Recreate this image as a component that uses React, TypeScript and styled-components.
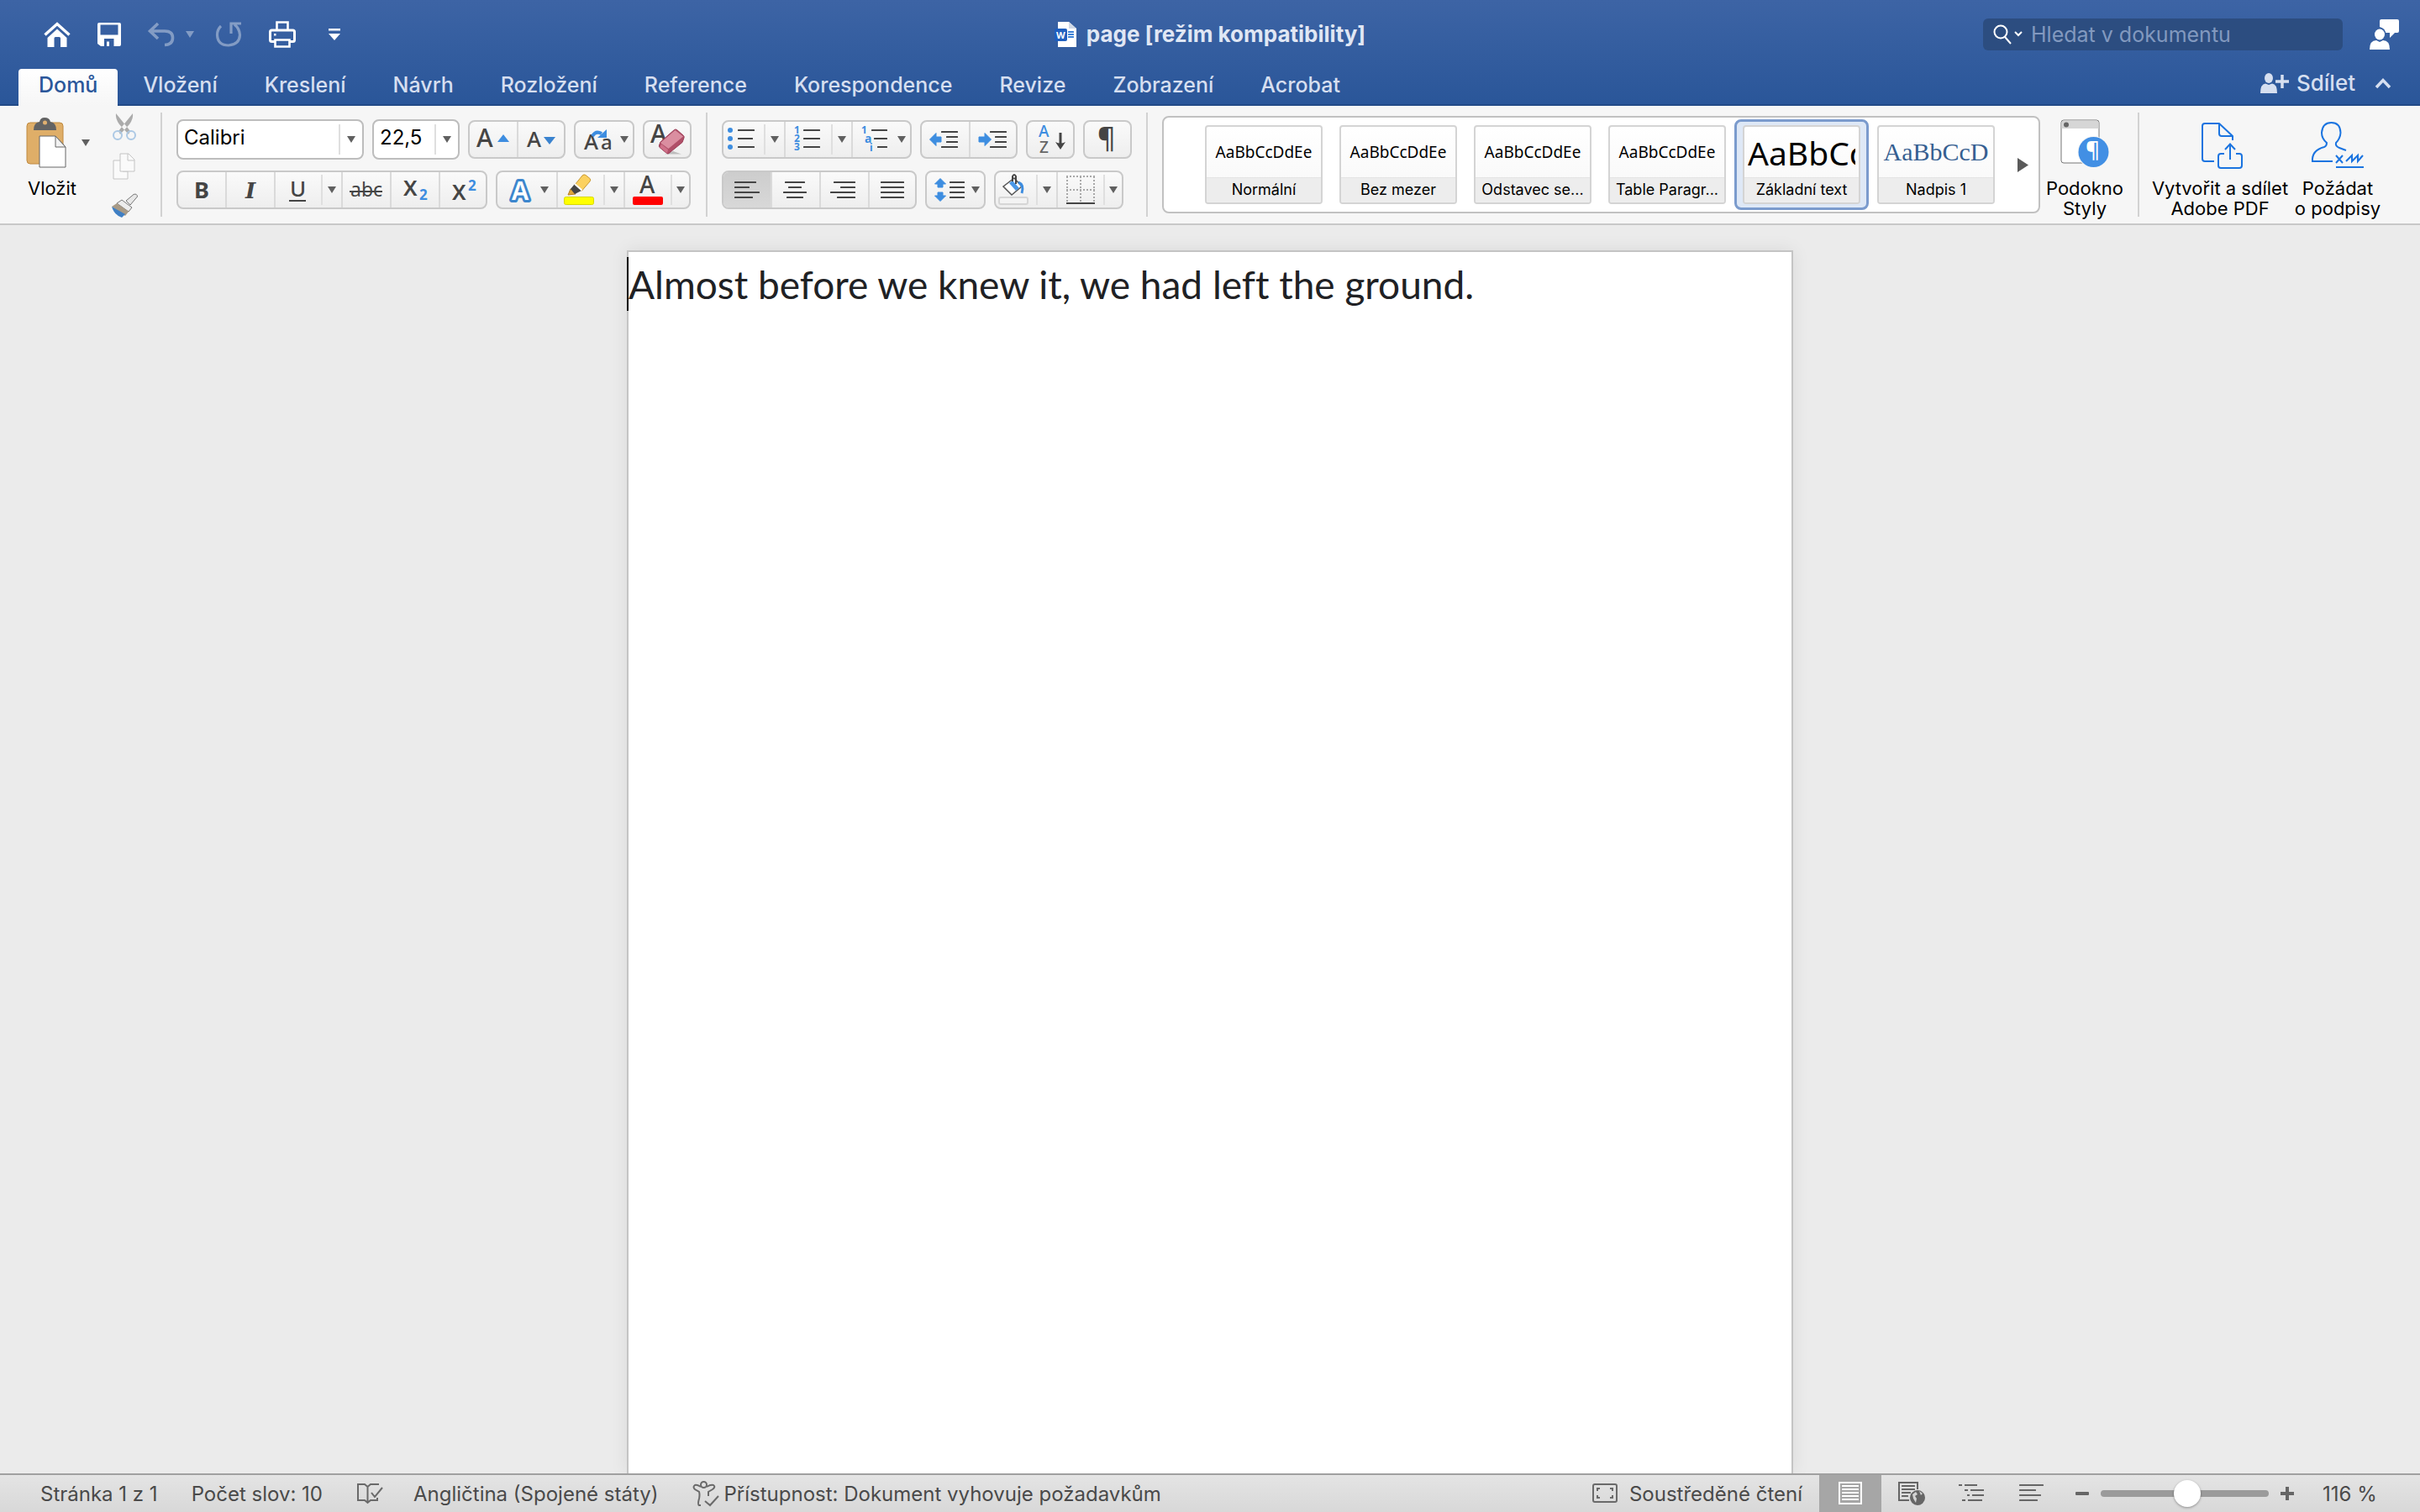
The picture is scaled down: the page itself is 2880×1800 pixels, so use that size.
import React from 'react';
import styled, { createGlobalStyle, css } from 'styled-components';

const GlobalStyle = createGlobalStyle`
  *, *::before, *::after { box-sizing: border-box; }
  html, body, #root { height: 100%; }
  body { margin: 0; background: #ebebeb; overflow: hidden; }
  button, input { font-family: inherit; font-size: inherit; color: inherit; margin: 0; }
  button { padding: 0; border: 0; background: none; display: inline-flex; align-items: center; justify-content: center; }
  svg { display: block; flex: none; overflow: visible; }
`;

const UI = `Inter, 'Liberation Sans', sans-serif`;
const HUMAN = `'Noto Sans', 'Open Sans', sans-serif`;

const Window = styled.div`
  display: flex;
  flex-direction: column;
  height: 100vh;
  font-family: ${UI};
  color: #000;
`;

/* ---------- Title bar ---------- */

const Header = styled.header`
  background: linear-gradient(#3d64a5, #2a5699);
  border-bottom: 2px solid #224a87;
  color: #d6dff0;
`;

const TitleRow = styled.div`
  display: grid;
  grid-template-columns: 1fr auto 1fr;
  align-items: center;
  height: 82px;
`;

const QuickBar = styled.nav`
  display: flex;
  align-items: center;
  padding-left: 48px;
  color: #fff;
`;

const QuickButton = styled.button<{ $w?: number; $gap?: number; $dim?: boolean }>`
  width: ${p => p.$w ?? 40}px;
  height: 40px;
  margin-right: ${p => p.$gap ?? 22}px;
  opacity: ${p => (p.$dim ? 0.38 : 1)};
`;

const Title = styled.h1`
  display: flex;
  align-items: center;
  gap: 12px;
  margin: 0;
  font-size: 26px;
  line-height: 32px;
  font-weight: 700;
  color: #e0e7f4;
`;

const HeaderRight = styled.div`
  display: flex;
  justify-content: flex-end;
  align-items: center;
  gap: 32px;
  padding-right: 25px;
`;

const SearchBox = styled.label`
  display: flex;
  align-items: center;
  gap: 10px;
  width: 428px;
  height: 38px;
  padding: 0 12px;
  border-radius: 6px;
  background: #2c4d80;
`;

const SearchInput = styled.input`
  flex: 1;
  min-width: 0;
  height: 36px;
  padding: 0;
  border: 0;
  outline: 0;
  background: transparent;
  font-size: 25px;
  color: #fff;
  &::placeholder { color: #8299bf; opacity: 1; }
`;

const TabRow = styled.div`
  display: flex;
  align-items: stretch;
  justify-content: space-between;
  height: 42px;
  padding: 0 33px 0 22px;
`;

const TabList = styled.div`
  display: flex;
`;

const Tab = styled.button<{ $active?: boolean }>`
  height: 44px;
  padding: 0 28px 6px;
  font-size: 25px;
  line-height: 36px;
  font-weight: 500;
  border-radius: 4px 4px 0 0;
  ${p => p.$active && css`
    padding: 0 24px 6px;
    margin-right: 2px;
    background: linear-gradient(#fff, #f6f6f6);
    color: #2b579a;
  `}
`;

const TabActions = styled.div`
  display: flex;
  align-items: center;
  gap: 22px;
  padding-bottom: 8px;
`;

const ShareButton = styled.button`
  gap: 8px;
  font-size: 26px;
  line-height: 32px;
  font-weight: 500;
`;

/* ---------- Ribbon ---------- */

const Ribbon = styled.section`
  display: flex;
  align-items: flex-start;
  height: 142px;
  padding: 0 49px 0 22px;
  background: #f6f6f6;
  border-bottom: 2px solid #c8c8c8;
`;

const Separator = styled.div`
  flex: none;
  width: 2px;
  height: 124px;
  margin: 8px 17px 0;
  background: #d2d2d2;
`;

const Clipboard = styled.div`
  display: flex;
  align-items: flex-start;
  width: 152px;
  flex: none;
`;

const PasteButton = styled.button`
  flex-direction: column;
  gap: 11px;
  width: 84px;
  padding: 14px 4px 0 0;
  font-size: 22px;
  line-height: 26px;
`;

const PasteIconRow = styled.span`
  display: flex;
  align-items: center;
  gap: 18px;
  margin-right: -13px;
`;

const ClipTools = styled.div`
  display: flex;
  flex-direction: column;
  align-items: center;
  gap: 12px;
  padding: 7px 0 0 24px;
`;

const ClipButton = styled.button`
  width: 36px;
  height: 35px;
`;

const ToolRows = styled.div`
  display: flex;
  flex-direction: column;
  flex: none;
  padding-top: 16px;
  gap: 12px;
`;

const ToolRow = styled.div`
  display: flex;
  align-items: center;
  height: 48px;
  gap: 10px;
`;

const Group = styled.div`
  display: flex;
  height: 46px;
  border: 2px solid #c9c9c9;
  border-radius: 8px;
  background: linear-gradient(#fafafa, #eeeeee);
`;

const Tool = styled.button<{ $w: number; $on?: boolean }>`
  flex: none;
  width: ${p => p.$w}px;
  height: 42px;
  justify-content: flex-start;
  border-left: 2px solid #dadada;
  &:first-child { border-left: 0; border-radius: 6px 0 0 6px; }
  ${p => p.$on && css`background: linear-gradient(#cdcdcd, #d8d8d8);`}
`;

const CaretTool = styled.button<{ $w?: number }>`
  flex: none;
  width: ${p => p.$w ?? 24}px;
  height: 36px;
  align-self: center;
  border-left: 2px solid #dfdfdf;
`;

const Combo = styled.div<{ $w: number }>`
  display: flex;
  align-items: center;
  width: ${p => p.$w}px;
  height: 48px;
  border: 2px solid #bdbdbd;
  border-radius: 8px;
  background: #fff;
`;

const ComboInput = styled.input`
  flex: 1;
  min-width: 0;
  height: 40px;
  padding: 0 0 5px 7px;
  border: 0;
  outline: 0;
  background: transparent;
  font-size: 24px;
`;

const Gallery = styled.div`
  display: flex;
  justify-content: flex-end;
  align-items: center;
  flex: 1;
  min-width: 0;
  height: 116px;
  margin-top: 12px;
  overflow: hidden;
  border: 2px solid #c1c1c1;
  border-radius: 8px;
  background: #fff;
`;

const StyleSlot = styled.button<{ $on?: boolean }>`
  flex: none;
  width: 160px;
  height: 108px;
  border: 3px solid ${p => (p.$on ? '#7b9bcd' : 'transparent')};
  border-radius: 8px;
  background: ${p => (p.$on ? '#dee8f6' : 'transparent')};
`;

const StyleCard = styled.span`
  display: flex;
  flex-direction: column;
  width: 140px;
  height: 94px;
  overflow: hidden;
  border: 2px solid #d4d4d4;
  border-radius: 4px;
  background: linear-gradient(#fff, #f7f7f7);
`;

const Sample = styled.span<{ $size: number; $serif?: boolean }>`
  display: flex;
  align-items: center;
  justify-content: ${p => (p.$size > 36 ? 'flex-start' : 'center')};
  height: 60px;
  margin: 0 4px;
  overflow: hidden;
  white-space: nowrap;
  font-size: ${p => p.$size}px;
  font-family: ${p => (p.$serif ? `'Liberation Serif', serif` : HUMAN)};
  color: ${p => (p.$serif ? '#365f91' : '#000')};
`;

const StyleName = styled.span`
  height: 30px;
  line-height: 28px;
  font-size: 18px;
  text-align: center;
  white-space: nowrap;
  background: #ededed;
  border-top: 1px solid #e4e4e4;
`;

const GalleryNext = styled.button`
  flex: none;
  width: 42px;
  height: 100px;
  padding-left: 4px;
`;

const BigButton = styled.button<{ $w: number }>`
  flex: none;
  flex-direction: column;
  width: ${p => p.$w}px;
  padding-top: 15px;
  gap: 9px;
  font-size: 22px;
  line-height: 24px;
  text-align: center;
  white-space: pre;
`;

const PaneSlot = styled.div`
  flex: none;
  margin: 0 1px 0 8px;
`;

const SendSlot = styled.div`
  display: flex;
  flex: none;
  gap: 12px;
`;

/* ---------- Document ---------- */

const Canvas = styled.main`
  flex: 1;
  min-height: 0;
  display: flex;
  justify-content: center;
  padding-top: 30px;
  overflow: hidden;
  background: #ebebeb;
`;

const Page = styled.article`
  width: 1388px;
  max-width: 100%;
  border: 2px solid #c4c4c4;
  border-width: 2px 2px 0;
  background: #fff;
  box-shadow: 0 0 20px rgba(0, 0, 0, 0.08);
`;

const Line = styled.p`
  position: relative;
  margin: 6px 0 0;
  font-family: Lato, Calibri, sans-serif;
  font-size: 46px;
  line-height: 66px;
  font-variant-ligatures: none;
  color: #202124;
  white-space: nowrap;
`;

const TextCursor = styled.span`
  position: absolute;
  left: -2px;
  top: 0;
  width: 2px;
  height: 64px;
  background: #000;
`;

/* ---------- Status bar ---------- */

const StatusBar = styled.footer`
  display: flex;
  align-items: stretch;
  height: 46px;
  padding: 0 50px 0 48px;
  border-top: 2px solid #a0a0a0;
  background: linear-gradient(#e4e4e4, #d8d8d8);
  font-size: 24px;
  color: #4a4a4a;
`;

const StatusItem = styled.button<{ $gap?: number }>`
  margin-right: ${p => p.$gap ?? 40}px;
  gap: 6px;
  white-space: nowrap;
`;

const FocusItem = styled(StatusItem)`
  gap: 14px;
`;

const StatusSpacer = styled.div`
  flex: 1;
`;

const ViewButton = styled.button<{ $on?: boolean }>`
  width: ${p => (p.$on ? 74 : 71)}px;
  background: ${p => (p.$on ? '#a6a6a6' : 'transparent')};
`;

const ZoomControl = styled.div`
  display: flex;
  align-items: center;
  gap: 14px;
  margin-left: 18px;
`;

const ZoomSlider = styled.input`
  appearance: none;
  width: 200px;
  height: 32px;
  background: transparent;
  &::-webkit-slider-runnable-track {
    height: 8px;
    border-radius: 4px;
    background: #9b9b9b;
  }
  &::-webkit-slider-thumb {
    appearance: none;
    width: 32px;
    height: 32px;
    margin-top: -12px;
    border-radius: 50%;
    background: #fff;
    box-shadow: 0 1px 3px rgba(0, 0, 0, 0.35);
  }
`;

const ZoomValue = styled.output`
  width: 66px;
  margin-left: 20px;
  white-space: nowrap;
`;

/* ---------- Icon helpers ---------- */

const INK = '#454545';
const BLUE = '#3d8de0';

type IconProps = { w: number; h?: number; children: React.ReactNode };
const Icon = ({ w, h = 42, children }: IconProps) => (
  <svg width={w} height={h} viewBox={`0 0 ${w} ${h}`} fill="none" aria-hidden="true">{children}</svg>
);

const Caret = ({ color = '#606060' }: { color?: string }) => (
  <Icon w={10} h={8}><path d="M0 0H10L5 8Z" fill={color} /></Icon>
);

type GlyphProps = { x: number; y: number; s: number; c?: string; b?: number; f?: string; i?: boolean; children: string };
const Glyph = ({ x, y, s, c = INK, b = 400, f = HUMAN, i, children }: GlyphProps) => (
  <text x={x} y={y} fontSize={s} fill={c} fontWeight={b} fontFamily={f} fontStyle={i ? 'italic' : 'normal'}>{children}</text>
);

const Lines = ({ rows, color = INK }: { rows: number[][]; color?: string }) => (
  <>{rows.map(([x1, x2, y]) => <rect key={y} x={x1} y={y - 1} width={x2 - x1} height={2} rx={0.5} fill={color} />)}</>
);

const InnerCaret = () => <path d="M53 17H63L58 25Z" fill="#606060" />;

const More = ({ label, w }: { label: string; w?: number }) => (
  <CaretTool aria-label={label} $w={w}><Caret /></CaretTool>
);

/* ---------- Data ---------- */

const tabs = ['Domů', 'Vložení', 'Kreslení', 'Návrh', 'Rozložení', 'Reference', 'Korespondence', 'Revize', 'Zobrazení', 'Acrobat'];

const styleCards = [
  { name: 'Normální', sample: 'AaBbCcDdEe', size: 19 },
  { name: 'Bez mezer', sample: 'AaBbCcDdEe', size: 19 },
  { name: 'Odstavec se...', sample: 'AaBbCcDdEe', size: 19 },
  { name: 'Table Paragr...', sample: 'AaBbCcDdEe', size: 19 },
  { name: 'Základní text', sample: 'AaBbCc', size: 39, on: true },
  { name: 'Nadpis 1', sample: 'AaBbCcD', size: 30, serif: true },
];

/* ---------- Parts ---------- */

const QuickAccess = () => (
  <QuickBar aria-label="Rychlý přístup">
    <QuickButton aria-label="Domů" $gap={22}>
      <Icon w={32} h={30}>
        <path d="M1.5 15.5L16 2.5L30.5 15.5" stroke="#fff" strokeWidth="3.4" />
        <path d="M4.5 19L16 8.5L27.5 19V30H20V19.5Q20 18 18.500 18H14Q12.500 18 12.500 19.500V30H4.500Z" fill="#fff" />
      </Icon>
    </QuickButton>
    <QuickButton aria-label="Uložit" $gap={22}>
      <Icon w={28} h={28}>
        <path fillRule="evenodd" d="M2 0H26Q28 0 28 2V26Q28 28 26 28H4L0 25V2Q0 0 2 0ZM3.500 2.500V14.500H24.500V2.500ZM8 19V28H11V22.500H14V28H19.500V19Z" fill="#fff" />
      </Icon>
    </QuickButton>
    <QuickButton aria-label="Zpět" $gap={4} $dim>
      <Icon w={32} h={28}>
        <path d="M12 1L2.500 10L12 19M3 10H20Q29.500 10 29.500 18Q29.500 26 20 26.500" stroke="#fff" strokeWidth="3.600" />
      </Icon>
    </QuickButton>
    <QuickButton aria-label="Možnosti zpět" $w={20} $gap={16} $dim><Caret color="#fff" /></QuickButton>
    <QuickButton aria-label="Opakovat" $gap={24} $dim>
      <Icon w={30} h={30}>
        <path d="M6 5Q1.500 9 1.500 15.500Q2 28 15 28Q28 27 28.500 15.500Q28 8 22 3M30 2H18V14" stroke="#fff" strokeWidth="3.200" />
      </Icon>
    </QuickButton>
    <QuickButton aria-label="Tisk" $gap={22}>
      <Icon w={32} h={32}>
        <path d="M9.500 11V1.500H22.500V11" stroke="#fff" strokeWidth="2.600" />
        <path d="M7 24.500H3.500Q1.500 24.500 1.500 22.500V13Q1.500 11 3.500 11H28.500Q30.500 11 30.500 13V22.500Q30.500 24.500 28.500 24.500H25" stroke="#fff" strokeWidth="3" />
        <path d="M7.500 22.500H24.500V30.500H7.500Z" stroke="#fff" strokeWidth="2.600" />
        <rect x="6" y="15" width="2.500" height="2.500" fill="#fff" />
      </Icon>
    </QuickButton>
    <QuickButton aria-label="Přizpůsobit panel" $gap={0}>
      <Icon w={14} h={14}><path d="M0 0H14V2.500H0ZM0 6H14L7 14Z" fill="#fff" /></Icon>
    </QuickButton>
  </QuickBar>
);

const FontTools = () => (
  <ToolRows>
    <ToolRow>
      <Combo $w={223}>
        <ComboInput aria-label="Písmo" defaultValue="Calibri" />
        <More label="Seznam písem" w={28} />
      </Combo>
      <Combo $w={104}>
        <ComboInput aria-label="Velikost písma" defaultValue="22,5" />
        <More label="Seznam velikostí" w={28} />
      </Combo>
      <Group>
        <Tool $w={56} aria-label="Zvětšit písmo">
          <Icon w={56}><Glyph x={8} y={30} s={30} b={500}>A</Glyph><path d="M33 24H47L40 15Z" fill={BLUE} /></Icon>
        </Tool>
        <Tool $w={56} aria-label="Zmenšit písmo">
          <Icon w={54}><Glyph x={10} y={30} s={26} b={500}>A</Glyph><path d="M30 18H44L37 27Z" fill="#3a83cf" /></Icon>
        </Tool>
      </Group>
      <Group>
        <Tool $w={68} aria-label="Změnit velikost písmen">
          <Icon w={68}>
            <Glyph x={10} y={33} s={26} b={500}>A</Glyph>
            <Glyph x={30} y={33} s={24} b={500}>a</Glyph>
            <path d="M20 17Q24 10 31 14" stroke={BLUE} strokeWidth="4" />
            <path d="M37 9V19H26Z" fill={BLUE} />
            <InnerCaret />
          </Icon>
        </Tool>
      </Group>
      <Group>
        <Tool $w={54} aria-label="Vymazat formátování">
          <Icon w={54}>
            <Glyph x={7} y={25} s={30} b={500}>A</Glyph>
            <path d="M24 38.500H44L34 35Z" fill="#bdbdbd" />
            <path d="M35.500 9.500Q37 8.500 38.500 9.500L46.500 16.500Q47.500 17.500 47 19L45 24.500L29 37.500Q28 38.500 26.500 37.500L18 30.500Q17 29.500 17.500 28L19 24Z" fill="#b04f68" stroke="#9c3f58" />
            <path d="M36.500 10L46 17.500L28.500 32L19 25Z" fill="#da8ea0" />
            <path d="M28 33L27 37.500L18.500 30.500L20 26.500Z" fill="#cf7189" />
          </Icon>
        </Tool>
      </Group>
    </ToolRow>
    <ToolRow>
      <Group>
        <Tool $w={56} aria-label="Tučné"><Icon w={56}><Glyph x={19} y={31} s={27} b={700}>B</Glyph></Icon></Tool>
        <Tool $w={58} aria-label="Kurzíva"><Icon w={56}><Glyph x={22} y={31} s={26} b={700} f="'DejaVu Serif', serif" i>I</Glyph></Icon></Tool>
        <Tool $w={56} aria-label="Podtržené">
          <Icon w={54}><Glyph x={17} y={29} s={26} b={500}>U</Glyph><rect x="16" y="33" width="20" height="2" fill={INK} /></Icon>
        </Tool>
        <More label="Styly podtržení" />
        <Tool $w={58} aria-label="Přeškrtnuté">
          <Icon w={56}><Glyph x={9} y={29} s={23}>abc</Glyph><rect x="8" y="22" width="39" height="2" fill={INK} /></Icon>
        </Tool>
        <Tool $w={58} aria-label="Dolní index">
          <Icon w={56}><Glyph x={14} y={28} s={26} b={600}>X</Glyph><Glyph x={33} y={33} s={17} b={700} c={BLUE}>2</Glyph></Icon>
        </Tool>
        <Tool $w={56} aria-label="Horní index">
          <Icon w={54}><Glyph x={14} y={33} s={26} b={600}>X</Glyph><Glyph x={33} y={22} s={17} b={700} c={BLUE}>2</Glyph></Icon>
        </Tool>
      </Group>
      <Group>
        <Tool $w={70} aria-label="Textové efekty">
          <Icon w={70}>
            <text x="17" y="33" fontSize="30" fontWeight="600" fontFamily={HUMAN} fill="#fff" stroke="#3c86cd" strokeWidth="6" strokeLinejoin="round" paintOrder="stroke">A</text>
            <path d="M51 17H61L56 25Z" fill="#606060" />
          </Icon>
        </Tool>
        <Tool $w={56} aria-label="Barva zvýraznění textu">
          <Icon w={54}>
            <path d="M15 20L12 27L21 26L19 22Z" fill="#dfa63a" stroke="#b98224" />
            <path d="M20 14L28 22L20 26L15 20Z" fill="#454545" />
            <path d="M29 4Q31 2 33 3.500L38 7.500Q39.500 9 38 11L28.500 22L20.500 14.500Z" fill="#fbd160" stroke="#c99a34" />
            <path d="M20 14L28.500 21.500" stroke="#fff" strokeWidth="2" />
            <rect x="7.500" y="29.500" width="35" height="9" rx="2" fill="#ff0" stroke="#d8d800" />
          </Icon>
        </Tool>
        <More label="Barvy zvýraznění" />
        <Tool $w={56} aria-label="Barva písma">
          <Icon w={54}><Glyph x={17} y={25} s={28} b={500}>A</Glyph><rect x="9" y="29" width="36" height="10" rx="2" fill="#f00" /></Icon>
        </Tool>
        <More label="Barvy písma" w={22} />
      </Group>
    </ToolRow>
  </ToolRows>
);

const Arrow = ({ d }: { d: string }) => <path d={d} fill={BLUE} stroke={BLUE} strokeLinejoin="round" />;

const ParagraphTools = () => (
  <ToolRows>
    <ToolRow>
      <Group>
        <Tool $w={48} aria-label="Odrážky">
          <Icon w={48}>
            {[10, 20, 30].map(y => <circle key={y} cx="8" cy={y} r="3" fill={BLUE} />)}
            <Lines rows={[[17, 37, 10], [17, 35, 20], [17, 37, 30]]} />
          </Icon>
        </Tool>
        <More label="Knihovna odrážek" />
        <Tool $w={56} aria-label="Číslování">
          <Icon w={54}>
            {['1', '2', '3'].map((n, k) => <Glyph key={n} x={10} y={14 + k * 10} s={12} b={700} c={BLUE}>{n}</Glyph>)}
            <Lines rows={[[21, 41, 10], [21, 41, 20], [21, 41, 30]]} />
          </Icon>
        </Tool>
        <More label="Knihovna číslování" />
        <Tool $w={70} aria-label="Víceúrovňový seznam">
          <Icon w={68}>
            <Glyph x={10} y={14} s={12} b={700} c={BLUE}>1</Glyph>
            <Glyph x={14} y={25} s={14} b={700} c={BLUE}>a</Glyph>
            <Glyph x={20} y={35} s={12} b={700} c={BLUE}>i</Glyph>
            <Lines rows={[[22, 41, 10], [25, 41, 20], [29, 41, 30]]} />
            <InnerCaret />
          </Icon>
        </Tool>
      </Group>
      <Group>
        <Tool $w={56} aria-label="Zmenšit odsazení">
          <Icon w={56}><Arrow d="M9.500 21L17 13.500V18H23V24H17V28.500Z" /><Lines rows={[[23, 43, 12], [29, 43, 18], [29, 43, 24], [23, 43, 30]]} /></Icon>
        </Tool>
        <Tool $w={56} aria-label="Zvětšit odsazení">
          <Icon w={54}><Arrow d="M24.500 21L17 13.500V18H10V24H17V28.500Z" /><Lines rows={[[23, 43, 12], [29, 43, 18], [29, 43, 24], [23, 43, 30]]} /></Icon>
        </Tool>
      </Group>
      <Group>
        <Tool $w={54} aria-label="Seřadit">
          <Icon w={54}>
            <Glyph x={13} y={18} s={19} b={500} c={BLUE}>A</Glyph>
            <Glyph x={14} y={37} s={19} b={500} c="#666">Z</Glyph>
            <path d="M39 13V28" stroke={INK} strokeWidth="3" /><path d="M33 24Q39 27 45 24L39 33Z" fill={INK} />
          </Icon>
        </Tool>
      </Group>
      <Group>
        <Tool $w={54} aria-label="Zobrazit netisknutelné znaky">
          <Icon w={54}><Glyph x={15} y={31} s={33} b={500}>¶</Glyph></Icon>
        </Tool>
      </Group>
    </ToolRow>
    <ToolRow>
      <Group>
        <Tool $w={56} $on aria-label="Zarovnat vlevo"><Icon w={56}><Lines rows={[[13, 39, 12], [13, 31, 18], [13, 43, 24], [13, 35, 30]]} /></Icon></Tool>
        <Tool $w={58} aria-label="Na střed"><Icon w={56}><Lines rows={[[15, 39, 12], [19, 35, 18], [13, 41, 24], [17, 37, 30]]} /></Icon></Tool>
        <Tool $w={58} aria-label="Zarovnat vpravo"><Icon w={56}><Lines rows={[[15, 41, 12], [23, 41, 18], [11, 41, 24], [19, 41, 30]]} /></Icon></Tool>
        <Tool $w={56} aria-label="Do bloku"><Icon w={54}><Lines rows={[[13, 41, 12], [13, 41, 18], [13, 41, 24], [13, 41, 30]]} /></Icon></Tool>
      </Group>
      <Group>
        <Tool $w={68} aria-label="Řádkování">
          <Icon w={68}>
            <Arrow d="M16 7.500L22.500 14H19V18H13V14H9.500Z" />
            <Arrow d="M16 34.500L22.500 28H19V24H13V28H9.500Z" />
            <Lines rows={[[27, 45, 12], [27, 45, 18], [27, 45, 24], [27, 45, 30]]} />
            <InnerCaret />
          </Icon>
        </Tool>
      </Group>
      <Group>
        <Tool $w={48} aria-label="Stínování">
          <Icon w={48}>
            <path d="M22 7L31 17L19 27L9 17Z" fill="#fff" stroke="#555" strokeWidth="1.500" />
            <path d="M16 13L20 10L28 19L24 22Z" fill="#4a97e6" />
            <path d="M27 12Q34 15 31 25" stroke={BLUE} strokeWidth="3" />
            <path d="M20 11V5Q22 1 24 5V14" stroke={INK} strokeWidth="2" />
            <rect x="4" y="30" width="34" height="8" rx="2" fill="#f3f3f3" stroke="#d6d6d6" strokeWidth="2" />
          </Icon>
        </Tool>
        <More label="Barvy stínování" />
        <Tool $w={56} aria-label="Ohraničení">
          <Icon w={54}>
            <path d="M10 5H44M10 21H44M11 5V35M27 5V35M43 5V35" stroke="#a9a9a9" strokeWidth="2" strokeDasharray="2 2" />
            <rect x="10" y="36" width="34" height="2" fill={INK} />
          </Icon>
        </Tool>
        <More label="Typy ohraničení" w={22} />
      </Group>
    </ToolRow>
  </ToolRows>
);

const ClipboardTools = () => (
  <Clipboard>
    <PasteButton>
      <PasteIconRow>
        <Icon w={48} h={60}>
          <rect x="1" y="6" width="43" height="49" rx="4" fill="#dfae68" stroke="#c08a40" />
          <path d="M9 15Q9 6 16 5Q17 0 22 0Q28 0 29 5Q36 6 36 15Z" fill="#636363" />
          <circle cx="22.500" cy="6" r="2.500" fill="#e0b070" />
          <path d="M16 22H35L47 35V59H16Z" fill="#fff" stroke="#666" />
          <path d="M35 22V35H47Z" fill="#f2f2f2" stroke="#666" />
        </Icon>
        <Caret />
      </PasteIconRow>
      Vložit
    </PasteButton>
    <ClipTools>
      <ClipButton aria-label="Vyjmout">
        <Icon w={28} h={32}>
          <path d="M4 0Q3 6 8 13L19 25L21 21ZM24 0Q25 6 20 13L9 25L7 21Z" fill="#ababab" />
          <circle cx="6" cy="26" r="5" stroke="#adc9e5" strokeWidth="2" /><circle cx="22" cy="26" r="5" stroke="#adc9e5" strokeWidth="2" />
        </Icon>
      </ClipButton>
      <ClipButton aria-label="Kopírovat">
        <Icon w={28} h={32}>
          <path d="M1 9H12V22H18V31H1Z" fill="#fafafa" stroke="#c4c4c4" />
          <path d="M9 1H19L26 8V22H9Z" fill="#fafafa" stroke="#c4c4c4" /><path d="M18 1V9H26" stroke="#c4c4c4" />
        </Icon>
      </ClipButton>
      <ClipButton aria-label="Kopírovat formát">
        <Icon w={34} h={30}>
          <path d="M19 9L28 1.500Q32 0 32.500 4L24 14Z" fill="#e8e8e8" stroke="#777" />
          <path d="M14 8L26 17L22 22L8 12Z" fill="#ececec" stroke="#777" />
          <path d="M8 12L22 22L18 27L2 16Z" fill="#a89a86" />
          <path d="M2 16L18 25L14 29Q5 26 2 16Z" fill="#3f7fc4" />
        </Icon>
      </ClipButton>
    </ClipTools>
  </Clipboard>
);

const StyleGallery = () => (
  <Gallery>
    {styleCards.map(s => (
      <StyleSlot key={s.name} $on={s.on}>
        <StyleCard>
          <Sample $size={s.size} $serif={s.serif}>{s.sample}</Sample>
          <StyleName>{s.name}</StyleName>
        </StyleCard>
      </StyleSlot>
    ))}
    <GalleryNext aria-label="Další styly"><Icon w={13} h={17}><path d="M0 0L13 8.500L0 17Z" fill="#5a5a5a" /></Icon></GalleryNext>
  </Gallery>
);

const AddIns = () => (
  <>
    <PaneSlot>
      <BigButton $w={90}>
        <Icon w={60} h={62}>
          <rect x="2" y="2" width="45" height="51" rx="3" fill="#fff" stroke="#777" />
          <path d="M2.500 12V5Q2.500 2.500 5 2.500H44Q46.500 2.500 46.500 5V12Z" fill="#d6d6d6" />
          <circle cx="8" cy="7.500" r="3" fill="#666" />
          <circle cx="40.500" cy="40" r="19" fill="#f6f6f6" /><circle cx="40.500" cy="40" r="18" fill="#428fe4" />
          <Glyph x={31} y={46} s={26} b={500} c="#fff">¶</Glyph>
        </Icon>
        {'Podokno\nStyly'}
      </BigButton>
    </PaneSlot>
    <Separator />
    <SendSlot>
      <BigButton $w={158}>
        <Icon w={46} h={62}>
          <path d="M16 51H5Q2 51 2 48V9Q2 6 5 6H22L38 21V26M22 6V18Q22 21 25 21H37" stroke="#1b74e0" strokeWidth="2" strokeLinejoin="round" />
          <path d="M28 42H24Q21 42 21 45V56Q21 59 24 59H46Q49 59 49 56V45Q49 42 46 42H42M35 49V31M29 37L35 30.500L41 37" stroke="#1b74e0" strokeWidth="2" />
        </Icon>
        {'Vytvořit a sdílet\nAdobe PDF'}
      </BigButton>
      <BigButton $w={98}>
        <Icon w={64} h={62}>
          <path d="M26 51H2Q1 38 16 34Q19 33 19 29Q13 24 13 17Q14 5 24.500 5Q35 5 35.500 17Q35 24 30 29Q29 33 34 35L42 38" stroke="#1b74e0" strokeWidth="2" />
          <path d="M30 44L38 53M38 44L30 53M42 51L49 44V51L56 44V51L62 44M30 58H63" stroke="#1b74e0" strokeWidth="2" />
        </Icon>
        {'Požádat\no podpisy'}
      </BigButton>
    </SendSlot>
  </>
);

const Status = () => (
  <StatusBar>
    <StatusItem>Stránka 1 z 1</StatusItem>
    <StatusItem>Počet slov: 10</StatusItem>
    <StatusItem $gap={36} aria-label="Kontrola pravopisu">
      <Icon w={32} h={28}>
        <path d="M26 4V3H17L13.500 6L10 3H2V22H10L13.500 25L17 22H25V19M13.500 6V26M18 13L22 18L31 7" stroke="#6a6a6a" strokeWidth="2" />
      </Icon>
    </StatusItem>
    <StatusItem>Angličtina (Spojené státy)</StatusItem>
    <StatusItem>
      <Icon w={32} h={32}>
        <circle cx="13.500" cy="5.500" r="3.500" stroke="#6a6a6a" strokeWidth="2" />
        <path d="M10 8Q5 5 3 6Q0 8 3 11L8 14Q9 17 8 22Q6 29 8 30H10M17 8Q22 5 25 6Q28 8 24 11L19 14V19M15 25L21 30L31 19" stroke="#6a6a6a" strokeWidth="2" />
      </Icon>
      Přístupnost: Dokument vyhovuje požadavkům
    </StatusItem>
    <StatusSpacer />
    <FocusItem $gap={20}>
      <Icon w={30} h={24}>
        <rect x="1" y="1" width="28" height="21" rx="2" stroke="#6a6a6a" strokeWidth="2" />
        <path d="M6 9V6H9M21 6H24V9M24 14V17H21M9 17H6V14" stroke="#6a6a6a" strokeWidth="2" />
      </Icon>
      Soustředěné čtení
    </FocusItem>
    <ViewButton $on aria-label="Rozložení při tisku">
      <Icon w={28} h={28}>
        <rect x="1" y="1" width="26" height="25" stroke="#fff" strokeWidth="2" />
        <Lines color="#fff" rows={[[4, 24, 5], [4, 24, 9], [4, 24, 13], [4, 24, 17], [4, 24, 21]]} />
      </Icon>
    </ViewButton>
    <ViewButton aria-label="Webové rozložení">
      <Icon w={34} h={30}>
        <path d="M14 23H2V2H24V10" stroke="#666" strokeWidth="2" />
        <Lines color="#666" rows={[[5, 21, 6], [5, 21, 10], [5, 16, 14], [5, 13, 18]]} />
        <circle cx="24" cy="20" r="9" fill="#666" />
        <path d="M18 16L22 13L24 16L21 18L23 21L22 26L19 21ZM26 12L30 15L28 17Z" fill="#d4d4d4" />
      </Icon>
    </ViewButton>
    <ViewButton aria-label="Osnova">
      <Icon w={30} h={24}>
        <path d="M0 2H4M7 2H22M7 8H11M14 8H30M10 14H13M16 14H30M4 20H8M11 20H28" stroke="#666" strokeWidth="2" />
      </Icon>
    </ViewButton>
    <ViewButton aria-label="Koncept">
      <Icon w={28} h={24}><Lines color="#666" rows={[[0, 29, 2], [0, 20, 8], [0, 26, 14], [0, 22, 20]]} /></Icon>
    </ViewButton>
    <ZoomControl>
      <button aria-label="Oddálit"><Icon w={16} h={16}><rect y="6" width="16" height="4" rx="1" fill="#666" /></Icon></button>
      <ZoomSlider type="range" aria-label="Lupa" min={0} max={200} defaultValue={104} />
      <button aria-label="Přiblížit"><Icon w={16} h={16}><path d="M6 0H10V6H16V10H10V16H6V10H0V6H6Z" fill="#666" /></Icon></button>
      <ZoomValue>116 %</ZoomValue>
    </ZoomControl>
  </StatusBar>
);

export default function App() {
  return (
    <Window>
      <GlobalStyle />
      <Header>
        <TitleRow>
          <QuickAccess />
          <Title>
            <Icon w={26} h={30}>
              <path d="M4 0H17L26 8V30H4Z" fill="#fff" /><path d="M17 0V8H26Z" fill="#cfd8e6" />
              <rect x="0" y="8" width="15" height="15" rx="2" fill="#1f5fbf" />
              <Glyph x={2} y={20} s={11} b={700} c="#fff">W</Glyph>
              <Lines color="#3d82d6" rows={[[16, 23, 12], [16, 23, 15], [16, 23, 18]]} />
            </Icon>
            page [režim kompatibility]
          </Title>
          <HeaderRight>
            <SearchBox>
              <Icon w={35} h={26}>
                <circle cx="9" cy="10" r="7.500" stroke="#fff" strokeWidth="2" />
                <path d="M14 16L21 24M26 10L30 14L34 10" stroke="#fff" strokeWidth="2" />
              </Icon>
              <SearchInput type="search" aria-label="Hledat v dokumentu" placeholder="Hledat v dokumentu" />
            </SearchBox>
            <button aria-label="Účet">
              <Icon w={35} h={36}>
                <path d="M14 0H33Q35 0 35 2V14Q35 16 33 16H30L24 22V16H18Q19 11 12 9V2Q12 0 14 0Z" fill="#fff" />
                <ellipse cx="12" cy="18" rx="7.500" ry="8" fill="#3861a3" />
                <ellipse cx="12" cy="18" rx="6" ry="6.500" fill="#fff" />
                <path d="M0 36Q0 25 8 25L12 27L16 25Q24 25 24 36Z" fill="#fff" />
              </Icon>
            </button>
          </HeaderRight>
        </TitleRow>
        <TabRow>
          <TabList role="tablist">
            {tabs.map((t, i) => <Tab key={t} role="tab" aria-selected={i === 0} $active={i === 0}>{t}</Tab>)}
          </TabList>
          <TabActions>
            <ShareButton>
              <Icon w={35} h={24}>
                <ellipse cx="10" cy="6" rx="5" ry="6" fill="#d6dff0" />
                <path d="M0 24Q0 13 6 12.500L10 14L14 12.500Q20 13 20 24Z" fill="#d6dff0" />
                <path d="M26 2V18M18 10H34" stroke="#d6dff0" strokeWidth="3.500" />
              </Icon>
              Sdílet
            </ShareButton>
            <button aria-label="Sbalit pás karet">
              <Icon w={22} h={14}><path d="M3 12L11 3.500L19 12" stroke="#d6dff0" strokeWidth="3.500" /></Icon>
            </button>
          </TabActions>
        </TabRow>
      </Header>
      <Ribbon>
        <ClipboardTools />
        <Separator />
        <FontTools />
        <Separator />
        <ParagraphTools />
        <Separator />
        <StyleGallery />
        <AddIns />
      </Ribbon>
      <Canvas>
        <Page>
          <Line><TextCursor />Almost before we knew it, we had left the ground.</Line>
        </Page>
      </Canvas>
      <Status />
    </Window>
  );
}
